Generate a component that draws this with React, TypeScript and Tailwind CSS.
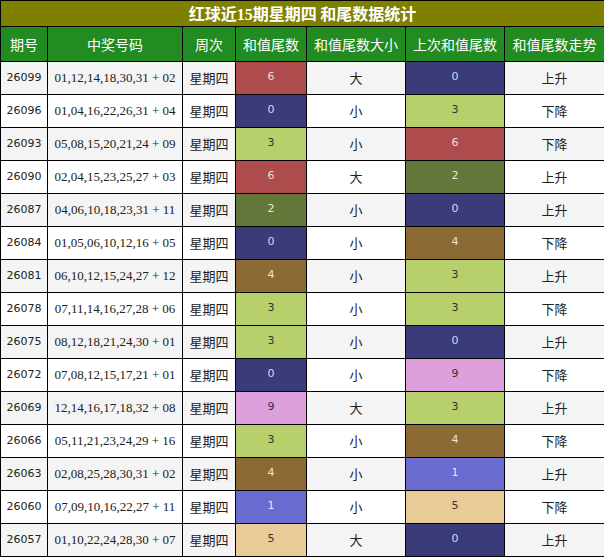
import React from 'react';

type Row = {
  issue: string;
  nums: string;
  sum: number;
  size: string;
  prev: number;
  trend: string;
};

const rows: Row[] = [
  { issue: '26099', nums: '01,12,14,18,30,31 + 02', sum: 6, size: '大', prev: 0, trend: '上升' },
  { issue: '26096', nums: '01,04,16,22,26,31 + 04', sum: 0, size: '小', prev: 3, trend: '下降' },
  { issue: '26093', nums: '05,08,15,20,21,24 + 09', sum: 3, size: '小', prev: 6, trend: '下降' },
  { issue: '26090', nums: '02,04,15,23,25,27 + 03', sum: 6, size: '大', prev: 2, trend: '上升' },
  { issue: '26087', nums: '04,06,10,18,23,31 + 11', sum: 2, size: '小', prev: 0, trend: '上升' },
  { issue: '26084', nums: '01,05,06,10,12,16 + 05', sum: 0, size: '小', prev: 4, trend: '下降' },
  { issue: '26081', nums: '06,10,12,15,24,27 + 12', sum: 4, size: '小', prev: 3, trend: '上升' },
  { issue: '26078', nums: '07,11,14,16,27,28 + 06', sum: 3, size: '小', prev: 3, trend: '下降' },
  { issue: '26075', nums: '08,12,18,21,24,30 + 01', sum: 3, size: '小', prev: 0, trend: '上升' },
  { issue: '26072', nums: '07,08,12,15,17,21 + 01', sum: 0, size: '小', prev: 9, trend: '下降' },
  { issue: '26069', nums: '12,14,16,17,18,32 + 08', sum: 9, size: '大', prev: 3, trend: '上升' },
  { issue: '26066', nums: '05,11,21,23,24,29 + 16', sum: 3, size: '小', prev: 4, trend: '下降' },
  { issue: '26063', nums: '02,08,25,28,30,31 + 02', sum: 4, size: '小', prev: 1, trend: '上升' },
  { issue: '26060', nums: '07,09,10,16,22,27 + 11', sum: 1, size: '小', prev: 5, trend: '下降' },
  { issue: '26057', nums: '01,10,22,24,28,30 + 07', sum: 5, size: '大', prev: 0, trend: '上升' },
];

// colour per tail digit
const tailClass: Record<number, string> = {
  0: 'bg-[#3a3b78] text-[#d8d8e8]',
  1: 'bg-[#6a6bcf] text-[#e4e4f4]',
  2: 'bg-[#64773a] text-[#e4e8d8]',
  3: 'bg-[#b7d06b] text-[#333333]',
  4: 'bg-[#8b6a34] text-[#ece4d4]',
  5: 'bg-[#e8cb97] text-[#333333]',
  6: 'bg-[#ae4b4c] text-[#f0dede]',
  9: 'bg-[#dda0dd] text-[#333333]',
};

const cjk = "font-['Noto_Sans_CJK_SC',sans-serif]";
const cell = 'border border-black text-center p-0 h-[33px]';

const App: React.FC = () => {
  return (
    <div className="w-[604px] h-[557px] overflow-hidden bg-white">
      <table className="w-[604px] table-fixed border-collapse border border-black text-[#222]">
        <colgroup>
          <col className="w-[47px]" />
          <col className="w-[135px]" />
          <col className="w-[53px]" />
          <col className="w-[71px]" />
          <col className="w-[99px]" />
          <col className="w-[99px]" />
          <col className="w-[100px]" />
        </colgroup>
        <thead>
          <tr>
            <th
              colSpan={7}
              className={`h-[26px] p-0 border border-black bg-[#808000] text-white text-[16px] font-bold leading-none ${cjk}`}
            >
              红球近<span className="font-['Liberation_Serif',serif]">15</span>期星期四 和尾数据统计
            </th>
          </tr>
          <tr className={`bg-[#228b22] text-white text-[14px] font-normal ${cjk}`}>
            <th className="border border-black h-[35px] p-0 font-normal">期号</th>
            <th className="border border-black p-0 font-normal">中奖号码</th>
            <th className="border border-black p-0 font-normal">周次</th>
            <th className="border border-black p-0 font-normal">和值尾数</th>
            <th className="border border-black p-0 font-normal">和值尾数大小</th>
            <th className="border border-black p-0 font-normal">上次和值尾数</th>
            <th className="border border-black p-0 font-normal">和值尾数走势</th>
          </tr>
        </thead>
        <tbody>
          {rows.map((r, i) => (
            <tr key={r.issue} className={i % 2 === 0 ? 'bg-[#f4f4f4]' : 'bg-white'}>
              <td className={`${cell} text-[11px] font-['DejaVu_Sans',sans-serif]`}>{r.issue}</td>
              <td className={`${cell} text-[13px] font-['Liberation_Serif',serif]`}>{r.nums}</td>
              <td className={`${cell} text-[13px] ${cjk}`}>星期四</td>
              <td className={`${cell} ${tailClass[r.sum]} text-[11px] font-['DejaVu_Sans',sans-serif] align-top pt-[7px]`}>{r.sum}</td>
              <td className={`${cell} text-[13px] ${cjk}`}>{r.size}</td>
              <td className={`${cell} ${tailClass[r.prev]} text-[11px] font-['DejaVu_Sans',sans-serif] align-top pt-[7px]`}>{r.prev}</td>
              <td className={`${cell} text-[13px] ${cjk}`}>{r.trend}</td>
            </tr>
          ))}
        </tbody>
      </table>
    </div>
  );
};

export default App;
